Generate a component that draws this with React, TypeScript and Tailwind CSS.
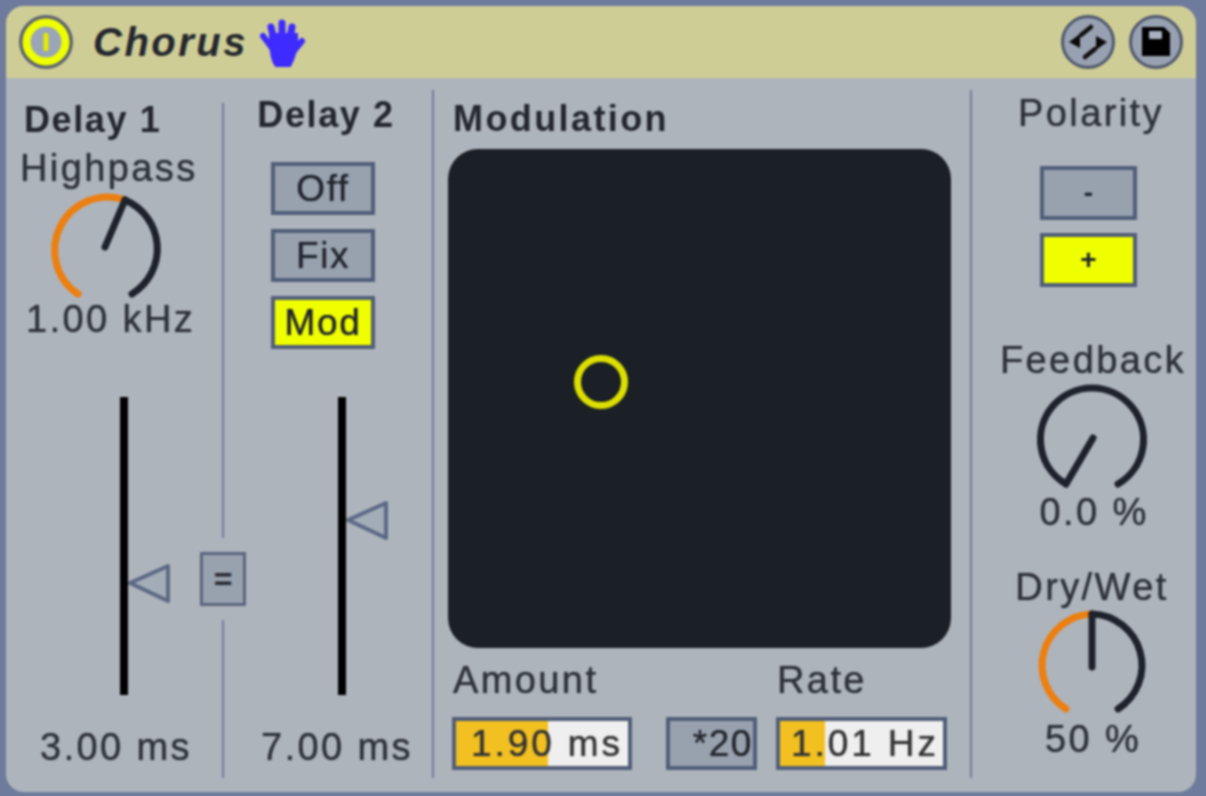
import React from "react";

const LABEL = "whitespace-nowrap text-[38px] leading-[40px] tracking-[2.4px] text-[#2d3139] [text-shadow:0_0_1px_#2d3139]";
const HEAD = "whitespace-nowrap text-[36px] font-bold leading-[38px] tracking-[1.6px] text-[#23262e]";

function Knob({ needle, arcOrange, arcDark }: { needle: string; arcOrange?: string; arcDark: string }) {
  return (
    <svg width="120" height="104" viewBox="0 0 120 104" className="block overflow-visible" fill="none" strokeWidth="7" strokeLinecap="round">
      {arcOrange ? <path d={arcOrange} stroke="#ec7f10" /> : null}
      <path d={arcDark} stroke="#1e222c" />
      <path d={needle} stroke="#1e222c" />
    </svg>
  );
}

function Toggle({ label, on, small }: { label: string; on?: boolean; small?: boolean }) {
  const size = small ? "h-[54px] w-[97px] text-[28px] font-bold" : "h-[53px] w-[104px] text-[37px] tracking-[1.6px] [text-shadow:0_0_1px_#20242c]";
  return (
    <div className={`${size} flex items-center justify-center border-[4px] border-[#515e78] leading-none text-[#20242c] ${on ? "bg-[#efff00]" : "bg-[#98a2af]"}`}>
      {label}
    </div>
  );
}

function Fader({ top, left }: { top: number; left: number }) {
  return (
    <div className="relative h-[298px] w-[8px] bg-black">
      <svg width="46" height="42" viewBox="0 0 46 42" className="absolute" style={{ top, left }}>
        <path d="M3 20 L41 3 V38 Z" fill="#a3adb8" stroke="#5d6984" strokeWidth="4" strokeLinejoin="round" />
      </svg>
    </div>
  );
}

function Hand() {
  return (
    <svg width="48" height="52" viewBox="0 0 48 52" className="ml-[11px] mt-[4px]" stroke="#3d2bff" strokeLinecap="round" fill="none">
      <path d="M11 16 Q11 42 17 48 H31 Q37 38 38 24 V16 Z" fill="#3d2bff" strokeWidth="2" />
      <path d="M13 30 L4 18" strokeWidth="6" />
      <path d="M15 22 L12 9" strokeWidth="7" />
      <path d="M23 20 L23 5" strokeWidth="7" />
      <path d="M31 20 L33 9" strokeWidth="7" />
      <path d="M34 34 L43 23" strokeWidth="6" />
    </svg>
  );
}

export default function App() {
  return (
    <div className="h-[796px] w-[1206px] overflow-hidden bg-[#6f7b9c] pb-[4px] pl-[6px] pr-[10px] pt-[6px] font-['Liberation_Sans',Arial,sans-serif]">
      <div className="flex h-full w-full flex-col overflow-hidden rounded-[18px] bg-[#aeb4bc] blur-[1px]">
        {/* Header */}
        <div className="flex h-[72px] items-center bg-[#cfcd96] pl-[12px] pr-[13px]">
          <svg width="56" height="56" viewBox="0 0 56 56">
            <circle cx="28" cy="28" r="27" fill="#5d6470" />
            <circle cx="28" cy="28" r="19.5" fill="#9aa5b8" stroke="#eeff00" strokeWidth="8" />
            <rect x="25.5" y="19" width="5" height="18" rx="1.5" fill="#e4ec00" />
          </svg>
          <span className="ml-[19px] text-[40px] font-bold italic leading-none tracking-[2.5px] text-[#24272e]">Chorus</span>
          <Hand />
          <div className="ml-auto flex items-center gap-[14px]">
            <svg width="54" height="54" viewBox="0 0 54 54">
              <circle cx="27" cy="27" r="25.5" fill="#98a1b1" stroke="#4e586c" strokeWidth="3" />
              <path d="M8 27 L19 19 V33 Z M46 27 L35 21 V35 Z" fill="#0a0a0a" />
              <path d="M20 20 L30 12 M34 34 L24 42" fill="none" stroke="#111" strokeWidth="4.5" strokeLinecap="round" />
            </svg>
            <svg width="54" height="54" viewBox="0 0 54 54">
              <circle cx="27" cy="27" r="25.5" fill="#98a1b1" stroke="#4e586c" strokeWidth="3" />
              <path d="M13 12 H35 L41 18 V41 H13 Z" fill="#000" />
              <rect x="20" y="16" width="13" height="8" rx="1" fill="#a9b1bf" />
            </svg>
          </div>
        </div>
        {/* Body */}
        <div className="flex flex-1">
          {/* Delay 1 */}
          <div className="flex w-[216px] flex-col items-start">
            <div className={`${HEAD} ml-[18px] mt-[23px]`}>Delay 1</div>
            <div className={`${LABEL} ml-[14px] mt-[9px]`}>Highpass</div>
            <div className="ml-[39px] mt-[6px]">
              <Knob
                arcOrange="M33 100 A53 53 0 0 1 80 6"
                arcDark="M80 6 A53 53 0 0 1 87 100"
                needle="M80 6 L60 53"
              />
            </div>
            <div className={`${LABEL} ml-[20px] mt-[1px]`}>1.00 kHz</div>
            <div className="ml-[114px] mt-[58px]"><Fader top={166} left={7} /></div>
            <div className={`${LABEL} ml-[34px] mt-[32px]`}>3.00 ms</div>
          </div>
          {/* Link divider */}
          <div className="relative mb-[14px] mt-[25px] w-[2px] bg-[#707c9c]">
            <div className="absolute left-1/2 top-[435px] flex h-[82px] w-[48px] -translate-x-1/2 items-start justify-center bg-[#aeb4bc] pt-[14px]">
              <div className="flex h-[54px] w-[46px] items-center justify-center border-[3px] border-[#5a667e] bg-[#98a2af] text-[32px] font-bold leading-none text-[#272b33]">=</div>
            </div>
          </div>
          {/* Delay 2 */}
          <div className="flex w-[208px] flex-col items-center">
            <div className={`${HEAD} -ml-[4px] mt-[18px]`}>Delay 2</div>
            <div className="-ml-[10px] mt-[28px] flex flex-col gap-[14px]">
              <Toggle label="Off" />
              <Toggle label="Fix" />
              <Toggle label="Mod" on />
            </div>
            <div className="ml-[28px] mt-[48px]"><Fader top={103} left={7} /></div>
            <div className={`${LABEL} ml-[18px] mt-[32px]`}>7.00 ms</div>
          </div>
          <div className="mb-[14px] mt-[12px] w-[2px] bg-[#707c9c]" />
          {/* Modulation */}
          <div className="flex w-[536px] flex-col pl-[14px]">
            <div className={`${HEAD} ml-[5px] mt-[22px] tracking-[2.4px]`}>Modulation</div>
            <div className="relative mt-[11px] h-[499px] w-[503px] rounded-[30px] bg-[#1b2026]">
              <div className="absolute left-[126px] top-[206px] h-[54px] w-[54px] rounded-full border-[7px] border-[#dcdf00]" />
            </div>
            <div className="mt-[11px] flex items-end">
              <div className={`${LABEL} w-[329px] pl-[5px] leading-[42px]`}>Amount</div>
              <div className={`${LABEL} leading-[42px]`}>Rate</div>
            </div>
            <div className="mt-[16px] flex items-center pl-[4px] text-[37px] leading-none tracking-[2.9px] [text-shadow:0_0_1px_#333333]">
              <div className="relative flex h-[53px] w-[180px] items-center border-[4px] border-[#515e78] bg-[#efefef]">
                <div className="h-full w-[92px] bg-[#f2c020]" />
                <span className="absolute left-[15px] whitespace-nowrap text-[#333333]">1.90 ms</span>
              </div>
              <div className="ml-[34px] flex h-[53px] w-[91px] items-center justify-end border-[4px] border-[#515e78] bg-[#98a2af] text-[#22262e] tracking-[1.6px]">*20</div>
              <div className="relative ml-[19px] flex h-[53px] w-[171px] items-center border-[4px] border-[#515e78] bg-[#efefef]">
                <div className="h-full w-[45px] bg-[#f2c020]" />
                <span className="absolute left-[11px] whitespace-nowrap text-[#333333]">1.01 Hz</span>
              </div>
            </div>
          </div>
          <div className="mb-[14px] mt-[12px] w-[2px] bg-[#707c9c]" />
          {/* Right */}
          <div className="flex flex-1 flex-col items-center">
            <div className={`${LABEL} ml-[14px] mt-[15px]`}>Polarity</div>
            <div className="ml-[9px] mt-[33px] flex flex-col gap-[13px]">
              <Toggle label="-" small />
              <Toggle label="+" on small />
            </div>
            <div className={`${LABEL} ml-[18px] mt-[53px]`}>Feedback</div>
            <div className="ml-[16px] mt-[5px]">
              <Knob arcDark="M34 99 A51.5 51.5 0 1 1 86 99" needle="M34 99 L61 53" />
            </div>
            <div className={`${LABEL} ml-[20px] mt-[3px]`}>0.0 %</div>
            <div className={`${LABEL} ml-[16px] mt-[35px]`}>Dry/Wet</div>
            <div className="ml-[16px] mt-[3px]">
              <Knob
                arcOrange="M34 99 A51.5 51.5 0 0 1 60 4"
                arcDark="M60 4 A51.5 51.5 0 0 1 86 99"
                needle="M60 4 V57"
              />
            </div>
            <div className={`${LABEL} ml-[18px] mt-[5px]`}>50 %</div>
          </div>
        </div>
      </div>
    </div>
  );
}
